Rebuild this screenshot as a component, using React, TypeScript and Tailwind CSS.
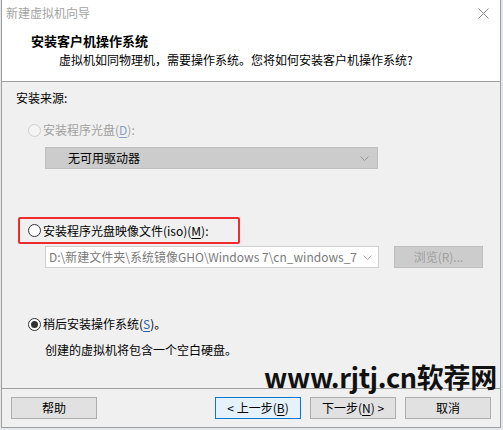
import React from 'react';

const font = { fontFamily: '"Noto Sans CJK SC", "Noto Sans", sans-serif' };

function Radio({ checked = false, disabled = false }: { checked?: boolean; disabled?: boolean }) {
  return (
    <span
      className={`flex h-[13px] w-[13px] shrink-0 items-center justify-center rounded-full border ${
        disabled ? 'border-[#cfcfcf] bg-[#f4f4f4]' : 'border-[#333333] bg-white'
      }`}
    >
      {checked && <span className="h-[7px] w-[7px] rounded-full bg-[#333333]" />}
    </span>
  );
}

function Chevron({ color = '#9a9a9a' }: { color?: string }) {
  return (
    <svg width="9" height="5" viewBox="0 0 9 5" fill="none">
      <path d="M0.5 0.5 L4.5 4.5 L8.5 0.5" stroke={color} strokeWidth="1" />
    </svg>
  );
}

function Button({ label, accel, after, before, primary }: { label: string; accel: string; after?: string; before?: string; primary?: boolean }) {
  return (
    <div
      className={`flex h-[22px] w-[86px] items-center justify-center border text-[12px] text-black ${
        primary ? 'border-[#0078d7] bg-[#e5f1fb]' : 'border-[#adadad] bg-[#e1e1e1]'
      }`}
    >
      {before}
      {label}
      {accel && (
        <>
          (<span className="underline underline-offset-2">{accel}</span>)
        </>
      )}
      {after}
    </div>
  );
}

export default function App() {
  return (
    <div className="relative h-[430px] w-[503px] overflow-hidden bg-[#e4e7eb]" style={font}>
      <div className="ml-[1px] flex h-[428px] w-[500px] flex-col border-x border-b border-[#9e9e9e] bg-[#f0f0f0]">
        {/* header */}
        <div className="flex h-[81px] flex-col bg-white">
          <div className="flex h-[26px] items-center justify-between pl-[4px] pr-[11px]">
            <span className="text-[12px] text-[#a3a3a3]">新建虚拟机向导</span>
            <svg width="11" height="11" viewBox="0 0 11 11">
              <path d="M0.5 0.5 L10.5 10.5 M10.5 0.5 L0.5 10.5" stroke="#8a8a8a" strokeWidth="1" />
            </svg>
          </div>
          <div className="ml-[29px] mt-[7px] text-[13px] font-bold leading-[16px] text-black">安装客户机操作系统</div>
          <div className="ml-[57px] mt-[3px] text-[12px] leading-[16px] text-black">
            虚拟机如同物理机，需要操作系统。您将如何安装客户机操作系统?
          </div>
        </div>
        <div className="h-px bg-[#a0a0a0]" />

        {/* body */}
        <div className="flex flex-1 flex-col text-[12px] leading-[16px] text-black">
          <div className="ml-[14px] mt-[8px]">安装来源:</div>

          <div className="ml-[26px] mt-[16px] flex items-center gap-[2px] text-[#a0a0a0]">
            <Radio disabled />
            <span>
              安装程序光盘(<span className="text-[#8a9fc6] underline underline-offset-2">D</span>):
            </span>
          </div>
          <div className="ml-[43px] mt-[9px] flex h-[22px] w-[333px] items-center justify-between border border-[#bfbfbf] bg-[#cccccc] pl-[22px] pr-[8px]">
            <span>无可用驱动器</span>
            <Chevron />
          </div>

          <div className="ml-[16px] mt-[48px] flex h-[27px] w-[222px] items-center gap-[2px] rounded-[2px] border-2 border-[#ef2b2d] pl-[8px]">
            <Radio />
            <span>
              安装程序光盘映像文件(iso)(<span className="underline underline-offset-2">M</span>):
            </span>
          </div>
          <div className="mt-[2px] flex items-center">
            <div className="ml-[43px] flex h-[22px] w-[334px] items-center overflow-hidden border border-[#d0d0d0] bg-white pl-[3px] pr-[6px]">
              <span className="min-w-0 flex-1 overflow-hidden whitespace-nowrap text-[#7a7a7a]">
                D:\新建文件夹\系统镜像GHO\Windows 7\cn_windows_7
              </span>
              <span className="ml-[6px]">
                <Chevron color="#b0b0b0" />
              </span>
            </div>
            <div className="ml-[15px] flex h-[22px] w-[89px] items-center justify-center border border-[#bfbfbf] bg-[#cccccc] text-[#a0a0a0]">
              浏览(R)...
            </div>
          </div>

          <div className="ml-[26px] mt-[48px] flex items-center gap-[2px]">
            <Radio checked />
            <span>
              稍后安装操作系统(<span className="text-[#2a5db0] underline underline-offset-2">S</span>)。
            </span>
          </div>
          <div className="ml-[43px] mt-[10px]">创建的虚拟机将包含一个空白硬盘。</div>
        </div>

        <div className="h-px bg-[#a0a0a0]" />
        {/* footer */}
        <div className="flex h-[38px] items-start pt-[8px]">
          <div className="ml-[9px]">
            <Button label="帮助" accel="" />
          </div>
          <div className="ml-[118px] flex gap-[9px]">
            <Button label="上一步" accel="B" before="< " primary />
            <Button label="下一步" accel="N" after=" >" />
            <Button label="取消" accel="" />
          </div>
        </div>
      </div>

      {/* watermark */}
      <div
        className="absolute left-[264px] top-[359px] whitespace-nowrap text-[27px] font-bold leading-[36px] tracking-[-0.3px] text-[#111111]"
        style={font}
      >
        www.rjtj.cn软荐网
      </div>
    </div>
  );
}
